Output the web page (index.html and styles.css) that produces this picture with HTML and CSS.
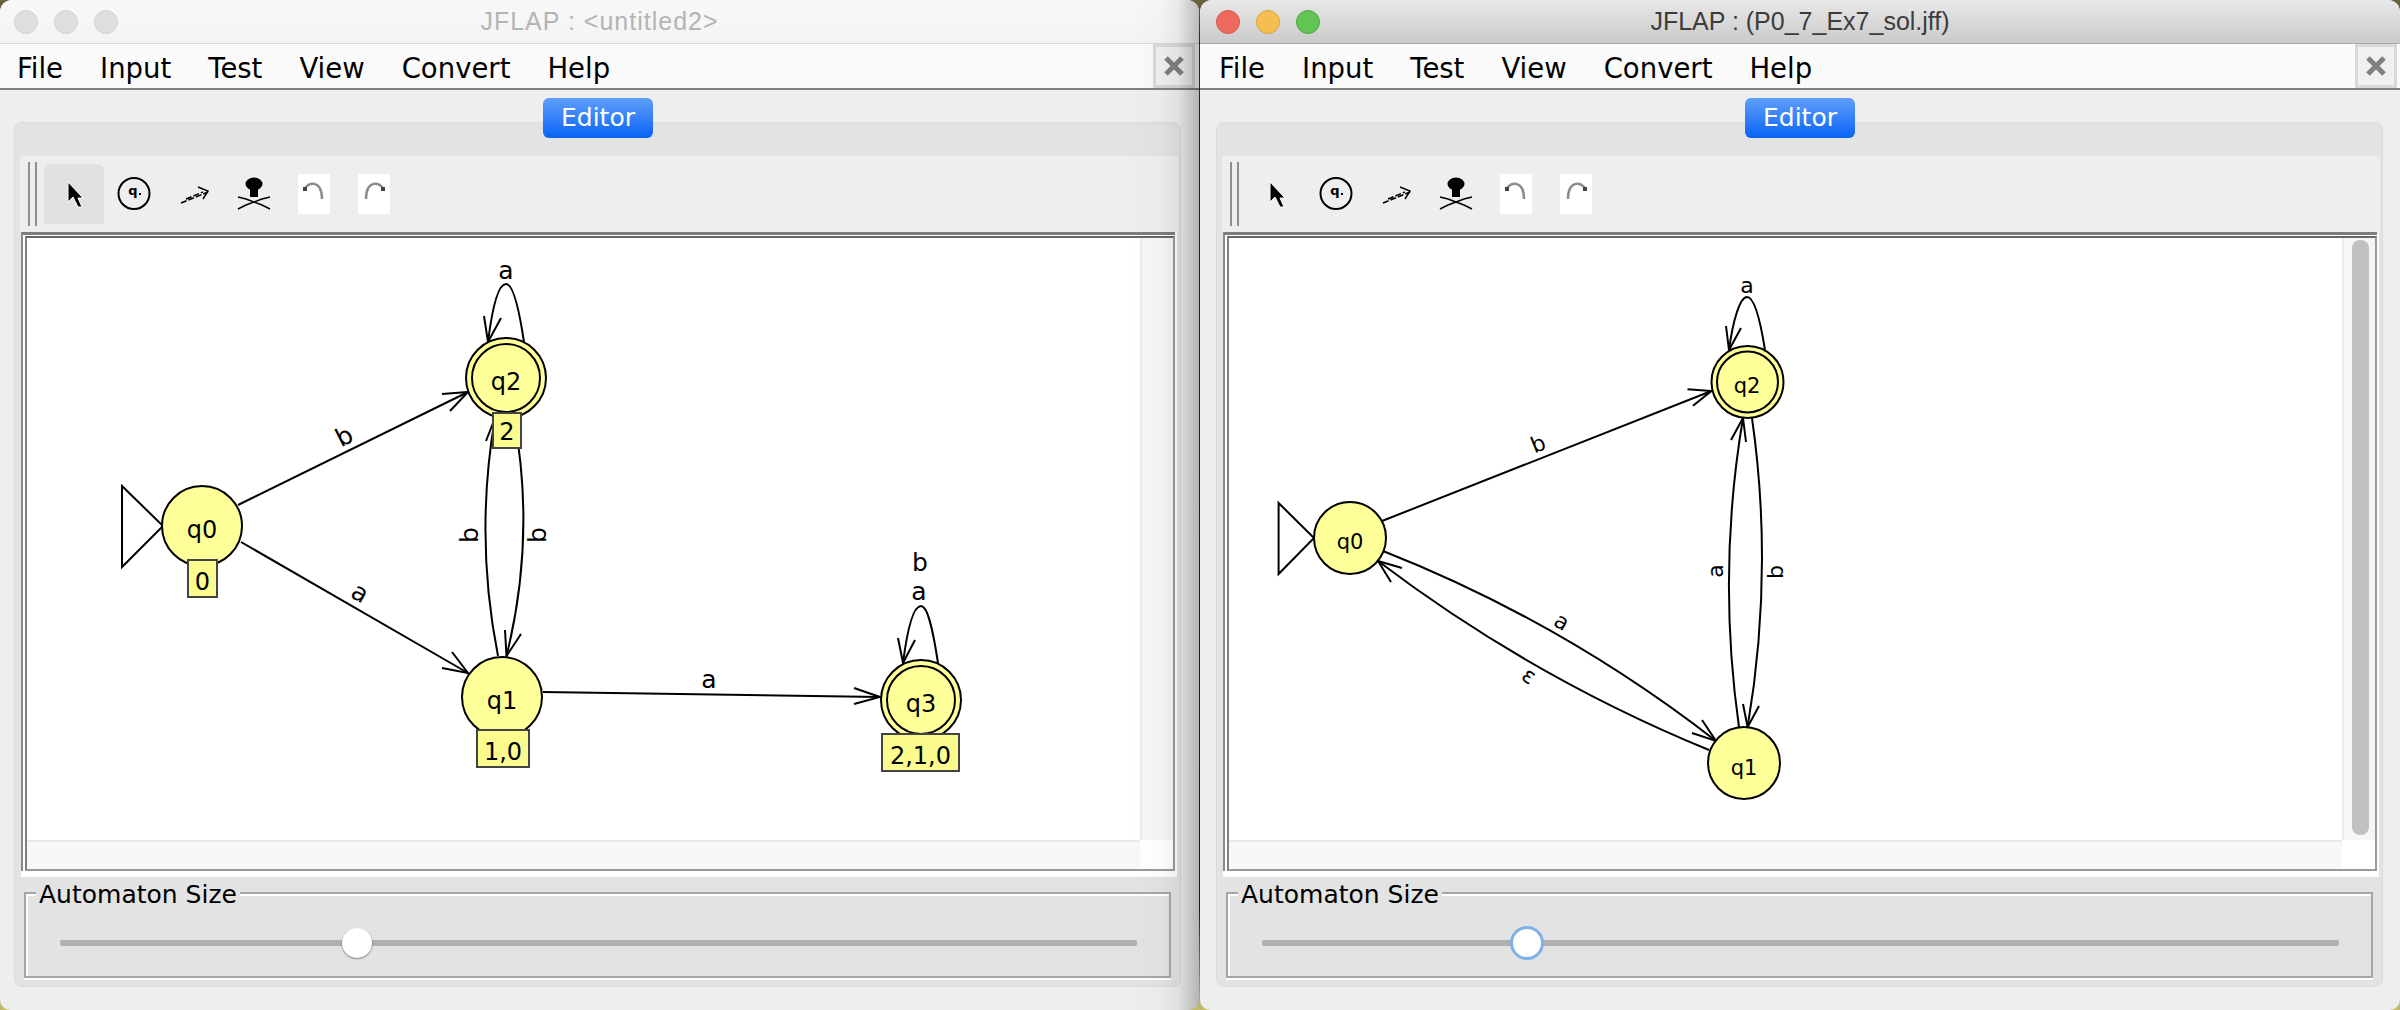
FILE: index.html
```html
<!DOCTYPE html>
<html lang="en">

<head>
    <meta charset="UTF-8" />
    <title>JFLAP</title>
    <link rel="stylesheet" href="styles.css">
</head>

<body>
    <div class="desktop">

        <!-- back window -->
        <div class="window window-back">
            <div class="titlebar">
                <div class="lights">
                    <span class="light"></span>
                    <span class="light"></span>
                    <span class="light"></span>
                </div>
                <span class="title">JFLAP : &lt;untitled2&gt;</span>
            </div>
            <div class="menubar">
                <span class="menu-item">File</span>
                <span class="menu-item">Input</span>
                <span class="menu-item">Test</span>
                <span class="menu-item">View</span>
                <span class="menu-item">Convert</span>
                <span class="menu-item">Help</span>
                <div class="close-box">
                    <svg width="20" height="20" viewBox="0 0 20 20"><path class="close-x" d="M2 2L18 18M18 2L2 18" /></svg>
                </div>
            </div>
            <div class="window-body">
                <div class="tab">Editor</div>
                <div class="pane">
                    <div class="toolbar">
                        <div class="grip"></div>
                        <div class="tool tool-selected">
                            <svg width="40" height="40" viewBox="0 0 40 40"><path class="ico-cursor" d="M14 8L14 28L19 23L24 33L28 33L24 24L29 24Z" /></svg>
                        </div>
                        <div class="tool">
                            <svg width="40" height="40" viewBox="0 0 40 40">
                                <circle class="ico-line" cx="20" cy="19.5" r="15.5" />
                                <text class="ico-q" x="19" y="21">q</text>
                                <rect x="25" y="19" width="2" height="2" />
                            </svg>
                        </div>
                        <div class="tool">
                            <svg width="40" height="40" viewBox="0 0 40 40">
                                <path class="ico-dash" d="M7 29L34 18M12 25L29 18" />
                                <path class="ico-thin" d="M24 13L34 17L29 25" />
                            </svg>
                        </div>
                        <div class="tool">
                            <svg width="40" height="40" viewBox="0 0 40 40">
                                <ellipse cx="20" cy="10" rx="8.5" ry="6.5" />
                                <rect x="16" y="13" width="8" height="10" />
                                <path class="ico-thin" d="M4 35L12 31L28 25L36 23M4 23L12 25L28 31L36 35" />
                            </svg>
                        </div>
                        <div class="tool">
                            <svg class="ico-box" width="32" height="40" viewBox="0 0 32 40">
                                <path class="ico-arc" d="M7 15C9 8 24 5 24 25" />
                                <rect class="ico-dot" x="5" y="13" width="4" height="4" />
                            </svg>
                        </div>
                        <div class="tool">
                            <svg class="ico-box" width="32" height="40" viewBox="0 0 32 40">
                                <path class="ico-arc" d="M25 15C23 8 8 5 8 25" />
                                <rect class="ico-dot" x="23" y="13" width="4" height="4" />
                            </svg>
                        </div>
                    </div>
                    <div class="canvas-wrap">
                        <div class="canvas-frame">
                            <div class="scroll-grid">
                                <svg class="graph" viewBox="27 238 1113 602">
                                    <path class="edge" d="M122 486L163 526L122 567Z" />
                                    <path class="edge" d="M238 505L468 392" />
                                    <path class="edge" d="M442 394L468 392L450 411" />
                                    <path class="edge" d="M241 542L468 673" />
                                    <path class="edge" d="M452 652L468 673L442 668" />
                                    <path class="edge" d="M543 692L880 697" />
                                    <path class="edge" d="M854 688L880 697L854 704" />
                                    <path class="edge" d="M514 418Q536 537 506.5 656" />
                                    <path class="edge" d="M505 630L506.5 656L521 634" />
                                    <path class="edge" d="M498 656Q474.5 537 495 418" />
                                    <path class="edge" d="M486 441L495 418" />
                                    <path class="edge" d="M524 342C518 302 512 284 506 284C498 284 492 310 488 342" />
                                    <path class="edge" d="M484 316L488 342L501 318" />
                                    <path class="edge" d="M938 663C932 624 927 606 921 606C913 606 907 632 903 663" />
                                    <path class="edge" d="M898 638L903 663L915 640" />

                                    <circle class="state" cx="202" cy="526" r="40" />
                                    <circle class="state" cx="506" cy="378" r="40" />
                                    <circle class="state" cx="506" cy="378" r="34" />
                                    <circle class="state" cx="502" cy="697" r="40" />
                                    <circle class="state" cx="921" cy="700" r="40" />
                                    <circle class="state" cx="921" cy="700" r="34" />

                                    <text class="label" x="202" y="538">q0</text>
                                    <text class="label" x="506" y="390">q2</text>
                                    <text class="label" x="502" y="709">q1</text>
                                    <text class="label" x="921" y="712">q3</text>

                                    <rect class="note" x="188" y="560" width="29" height="37" />
                                    <rect class="note" x="493" y="413" width="28" height="35" />
                                    <rect class="note" x="477" y="730" width="52" height="37" />
                                    <rect class="note" x="882" y="734" width="77" height="37" />
                                    <text class="label" x="202.5" y="590">0</text>
                                    <text class="label" x="507" y="440">2</text>
                                    <text class="label" x="503" y="760">1,0</text>
                                    <text class="label" x="920.5" y="764">2,1,0</text>

                                    <text class="edge-label" transform="translate(348 444) rotate(-27)">b</text>
                                    <text class="edge-label" transform="translate(356 600) rotate(30)">a</text>
                                    <text class="edge-label" x="506" y="279">a</text>
                                    <text class="edge-label" transform="translate(478 535) rotate(-90)">b</text>
                                    <text class="edge-label" transform="translate(546 535) rotate(-90)">b</text>
                                    <text class="edge-label" x="709" y="688">a</text>
                                    <text class="edge-label" x="919" y="600">a</text>
                                    <text class="edge-label" x="920" y="571">b</text>
                                </svg>
                                <div class="vtrack"></div>
                                <div class="htrack"></div>
                                <div class="corner"></div>
                            </div>
                        </div>
                    </div>
                    <div class="group">
                        <span class="group-label">Automaton Size</span>
                        <div class="slider">
                            <div class="thumb" style="left: 27.6%"></div>
                        </div>
                    </div>
                </div>
            </div>
            <div class="cast-shadow"></div>
        </div>

        <div class="divider"></div>

        <!-- front window -->
        <div class="window window-front">
            <div class="titlebar">
                <div class="lights">
                    <span class="light light-red"></span>
                    <span class="light light-yellow"></span>
                    <span class="light light-green"></span>
                </div>
                <span class="title">JFLAP : (P0_7_Ex7_sol.jff)</span>
            </div>
            <div class="menubar">
                <span class="menu-item">File</span>
                <span class="menu-item">Input</span>
                <span class="menu-item">Test</span>
                <span class="menu-item">View</span>
                <span class="menu-item">Convert</span>
                <span class="menu-item">Help</span>
                <div class="close-box">
                    <svg width="20" height="20" viewBox="0 0 20 20"><path class="close-x" d="M2 2L18 18M18 2L2 18" /></svg>
                </div>
            </div>
            <div class="window-body">
                <div class="tab">Editor</div>
                <div class="pane">
                    <div class="toolbar">
                        <div class="grip"></div>
                        <div class="tool">
                            <svg width="40" height="40" viewBox="0 0 40 40"><path class="ico-cursor" d="M14 8L14 28L19 23L24 33L28 33L24 24L29 24Z" /></svg>
                        </div>
                        <div class="tool">
                            <svg width="40" height="40" viewBox="0 0 40 40">
                                <circle class="ico-line" cx="20" cy="19.5" r="15.5" />
                                <text class="ico-q" x="19" y="21">q</text>
                                <rect x="25" y="19" width="2" height="2" />
                            </svg>
                        </div>
                        <div class="tool">
                            <svg width="40" height="40" viewBox="0 0 40 40">
                                <path class="ico-dash" d="M7 29L34 18M12 25L29 18" />
                                <path class="ico-thin" d="M24 13L34 17L29 25" />
                            </svg>
                        </div>
                        <div class="tool">
                            <svg width="40" height="40" viewBox="0 0 40 40">
                                <ellipse cx="20" cy="10" rx="8.5" ry="6.5" />
                                <rect x="16" y="13" width="8" height="10" />
                                <path class="ico-thin" d="M4 35L12 31L28 25L36 23M4 23L12 25L28 31L36 35" />
                            </svg>
                        </div>
                        <div class="tool">
                            <svg class="ico-box" width="32" height="40" viewBox="0 0 32 40">
                                <path class="ico-arc" d="M7 15C9 8 24 5 24 25" />
                                <rect class="ico-dot" x="5" y="13" width="4" height="4" />
                            </svg>
                        </div>
                        <div class="tool">
                            <svg class="ico-box" width="32" height="40" viewBox="0 0 32 40">
                                <path class="ico-arc" d="M25 15C23 8 8 5 8 25" />
                                <rect class="ico-dot" x="23" y="13" width="4" height="4" />
                            </svg>
                        </div>
                    </div>
                    <div class="canvas-wrap">
                        <div class="canvas-frame">
                            <div class="scroll-grid">
                                <svg class="graph graph-small" viewBox="1229 238 1113 602">
                                    <path class="edge" d="M1278.6 503L1314 538L1278.6 574Z" />
                                    <path class="edge" d="M1382 521L1711.4 391" />
                                    <path class="edge" d="M1687.5 389.3L1711.4 391L1693 405.7" />
                                    <path class="edge" d="M1383 551Q1563 622 1716 741" />
                                    <path class="edge" d="M1702 720L1716 741L1692 733" />
                                    <path class="edge" d="M1709 750Q1531 677 1378 561" />
                                    <path class="edge" d="M1402 568L1378 561L1391 582" />
                                    <path class="edge" d="M1739 727Q1717 572 1743 418" />
                                    <path class="edge" d="M1731 440L1743 418L1746 442" />
                                    <path class="edge" d="M1752 418Q1774 572 1747.6 727" />
                                    <path class="edge" d="M1743 704L1747.6 727L1759 706" />
                                    <path class="edge" d="M1765 350C1759 312 1753 297 1747 297C1740 297 1733 320 1729 350" />
                                    <path class="edge" d="M1726 326L1729 350L1741 328" />

                                    <circle class="state" cx="1350" cy="538" r="36" />
                                    <circle class="state" cx="1747.5" cy="382" r="36" />
                                    <circle class="state" cx="1747.5" cy="382" r="30.5" />
                                    <circle class="state" cx="1744" cy="763" r="36" />

                                    <text class="label" x="1350" y="549">q0</text>
                                    <text class="label" x="1747" y="393">q2</text>
                                    <text class="label" x="1744" y="775">q1</text>

                                    <text class="edge-label" transform="translate(1541 451) rotate(-22)">b</text>
                                    <text class="edge-label" transform="translate(1558 628) rotate(30)">a</text>
                                    <text class="edge-label" transform="translate(1525 682) rotate(35)">ε</text>
                                    <text class="edge-label" x="1747" y="293">a</text>
                                    <text class="edge-label" transform="translate(1723 571) rotate(-90)">a</text>
                                    <text class="edge-label" transform="translate(1783 572) rotate(-90)">b</text>
                                </svg>
                                <div class="vtrack"><div class="vthumb"></div></div>
                                <div class="htrack"></div>
                                <div class="corner"></div>
                            </div>
                        </div>
                    </div>
                    <div class="group">
                        <span class="group-label">Automaton Size</span>
                        <div class="slider">
                            <div class="thumb thumb-focus" style="left: 24.6%"></div>
                        </div>
                    </div>
                </div>
            </div>
        </div>
    </div>
</body>

</html>
```

FILE: styles.css
```css
html,
body {
    margin: 0;
    padding: 0;
}

body {
    width: 2400px;
    height: 1010px;
    overflow: hidden;
    background: linear-gradient(#6b6440 0, #2a2718 4%, #1d1c14 90%, #c3bd6c 100%);
}

.desktop {
    display: flex;
    height: 1010px;
}

.window {
    position: relative;
    display: flex;
    flex-direction: column;
    overflow: hidden;
    border-radius: 12px 12px 10px 10px;
    background: #eeeeee;
    font-family: "DejaVu Sans", sans-serif;
}

.window-back {
    width: 1199px;
}

.window-front {
    width: 1200px;
}

.divider {
    width: 1px;
}

/* title bar */
.titlebar {
    position: relative;
    display: flex;
    align-items: center;
    justify-content: center;
    height: 43px;
    flex: none;
    border-bottom: 1px solid #d6d6d6;
    background: linear-gradient(#f8f8f8, #f4f4f4);
}

.window-front .titlebar {
    border-bottom-color: #a8a8a8;
    background: linear-gradient(#e8e8e8, #cacaca);
}

.lights {
    position: absolute;
    left: 14px;
    top: 10px;
    display: flex;
    gap: 16px;
}

.window-front .lights {
    left: 16px;
}

.light {
    width: 22px;
    height: 22px;
    border: 1px solid #d2d2d2;
    border-radius: 50%;
    background: #dedede;
}

.light-red {
    background: #ee6a5f;
    border-color: #d5574c;
}

.light-yellow {
    background: #f6bd4f;
    border-color: #dea23a;
}

.light-green {
    background: #61c554;
    border-color: #4fa941;
}

.title {
    font-family: "Liberation Sans", sans-serif;
    font-size: 25px;
    letter-spacing: 1px;
    color: #b4b4b4;
}

.window-front .title {
    letter-spacing: 0;
    color: #3c3c3c;
}

/* menu bar */
.menubar {
    display: flex;
    align-items: center;
    box-sizing: border-box;
    height: 46px;
    flex: none;
    border-bottom: 2px solid #808080;
    background: #fafafa;
}

.window-front .menubar {
    padding-left: 2px;
}

.menu-item {
    padding: 3px 20px 0 17px;
    font-size: 27.5px;
    color: #000;
}

.close-box {
    display: flex;
    align-items: center;
    justify-content: center;
    box-sizing: border-box;
    width: 42px;
    height: 44px;
    margin-left: auto;
    margin-right: 4px;
    border: 3px solid #d8d8d8;
    background: #f0f0f0;
}

.window-front .close-box {
    margin-right: 3px;
}

.close-x {
    fill: none;
    stroke: #808080;
    stroke-width: 5;
}

/* editor pane */
.window-body {
    flex: 1;
    padding: 8px 0 0 14px;
}

.window-front .window-body {
    padding-left: 16px;
}

.tab {
    position: relative;
    z-index: 1;
    box-sizing: border-box;
    width: 110px;
    height: 40px;
    margin: 0 0 -16px 529px;
    border-radius: 6px;
    background: linear-gradient(#5f9ffb, #0a63f6);
    color: #fff;
    font-size: 25px;
    line-height: 40px;
    text-align: center;
}

.pane {
    box-sizing: border-box;
    width: 1167px;
    height: 865px;
    padding: 33px 2px 0 5px;
    border: 1px solid #dadada;
    border-radius: 8px;
    background: #e3e3e3;
}

.toolbar {
    display: flex;
    align-items: center;
    height: 76px;
    padding-left: 8px;
    background: #eeeeee;
}

.grip {
    box-sizing: border-box;
    width: 9px;
    height: 64px;
    margin-right: 7px;
    border-left: 2px solid #8f8f8f;
    border-right: 2px solid #8f8f8f;
}

.tool {
    display: flex;
    align-items: center;
    justify-content: center;
    width: 60px;
    height: 60px;
}

.tool-selected {
    border-radius: 6px 6px 0 0;
    background: #e1e1e1;
}

.ico-cursor {
    fill: #000;
    stroke: #fff;
    stroke-width: 1;
}

.ico-line {
    fill: none;
    stroke: #000;
    stroke-width: 2;
}

.ico-thin {
    fill: none;
    stroke: #000;
    stroke-width: 1.5;
}

.ico-dash {
    fill: none;
    stroke: #000;
    stroke-width: 1.5;
    stroke-dasharray: 6 2;
}

.ico-q {
    font-size: 13px;
    font-weight: bold;
    text-anchor: middle;
}

.ico-box {
    background: #fff;
}

.ico-arc {
    fill: none;
    stroke: #8c8c8c;
    stroke-width: 2.5;
}

.ico-dot {
    fill: #444;
}

/* canvas */
.canvas-wrap {
    box-sizing: border-box;
    width: 1156px;
    height: 645px;
    margin-left: 1px;
    padding-bottom: 6px;
    background: #fff;
}

.canvas-frame {
    box-sizing: border-box;
    width: 1154px;
    height: 639px;
    padding: 1px 0 0 2px;
    border-top: 3px solid #7c7c7c;
    border-left: 2px solid #8a8a8a;
    background: #fff;
}

.scroll-grid {
    box-sizing: border-box;
    display: grid;
    grid-template-columns: 1113px 1fr;
    grid-template-rows: 602px 1fr;
    height: 100%;
    border-top: 2px solid #666;
    border-left: 2px solid #808080;
    border-right: 2px solid #999;
    border-bottom: 2px solid #999;
}

.graph {
    display: block;
    width: 1113px;
    height: 602px;
    background: #fff;
}

.edge {
    fill: none;
    stroke: #000;
    stroke-width: 2;
}

.state {
    fill: #ffff99;
    stroke: #000;
    stroke-width: 2;
}

.note {
    fill: #fbfb8e;
    stroke: #444;
    stroke-width: 2;
}

.label,
.edge-label {
    font-family: "DejaVu Sans", sans-serif;
    font-size: 24px;
    text-anchor: middle;
}

.edge-label {
    font-size: 25px;
}

.graph-small .label {
    font-size: 21px;
}

.graph-small .edge-label {
    font-size: 22px;
}

.vtrack {
    box-sizing: border-box;
    padding: 2px 6px 0 8px;
    border-left: 2px solid #ececec;
    background: #f6f6f6;
}

.vthumb {
    height: 595px;
    border-radius: 8px;
    background: #c0c0c0;
}

.htrack {
    border-top: 2px solid #e8e8e8;
    background: #f8f8f8;
}

.corner {
    background: #fff;
}

/* size slider */
.group {
    box-sizing: border-box;
    width: 1147px;
    height: 86px;
    margin: 15px 0 0 4px;
    border: 2px solid #a6a6a6;
    box-shadow: inset 2px 2px 0 #fff, 0 2px 0 #fff;
}

.group-label {
    display: inline-block;
    margin: -14px 0 0 10px;
    padding: 0 3px;
    background: #e3e3e3;
    font-size: 25px;
    line-height: 30px;
    vertical-align: top;
}

.slider {
    position: relative;
    height: 6px;
    margin: 27px 32px 0 34px;
    border-radius: 2px;
    background: #b0b0b0;
}

.thumb {
    position: absolute;
    top: -12px;
    box-sizing: border-box;
    width: 30px;
    height: 30px;
    margin-left: -15px;
    border-radius: 50%;
    background: #fff;
    box-shadow: 0 1px 2px rgba(0, 0, 0, 0.45);
}

.thumb-focus {
    top: -14px;
    width: 34px;
    height: 34px;
    margin-left: -17px;
    border: 3px solid #7fb0e8;
    box-shadow: none;
}

/* shadow of the front window falling on the back one */
.cast-shadow {
    position: absolute;
    top: 0;
    right: 0;
    bottom: 0;
    width: 70px;
    pointer-events: none;
    background: linear-gradient(90deg, rgba(0, 0, 0, 0), rgba(0, 0, 0, 0.015) 45%, rgba(0, 0, 0, 0.06) 70%, rgba(0, 0, 0, 0.24) 100%);
}
```
